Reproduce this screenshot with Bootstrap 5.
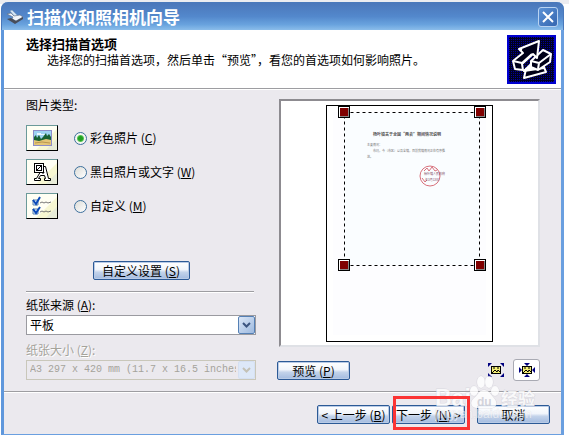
<!DOCTYPE html>
<html lang="zh-CN">
<head>
<meta charset="utf-8">
<meta name="viewport" content="width=device-width, initial-scale=1">
<title>扫描仪和照相机向导</title>
<link rel="stylesheet" href="https://cdn.jsdelivr.net/npm/bootstrap@5.3.0/dist/css/bootstrap.min.css">
<style>
  body { font: 12px/16px "Noto Sans CJK SC", sans-serif; color: #000; padding: 2px 5px 0 1px; background: linear-gradient(#ececf0 0 4px, #fff 4px); }
  .wizard { min-height: calc(100vh - 2px); background: #ebe9ee; border: 3px solid #6a9fe0; border-width: 0 3px 1px; border-radius: 7px 7px 0 0; border-left-color: #5f97dc; }
  .titlebar { height: 28px; margin: 0 -3px; padding: 0 5px 0 5px; border-radius: 7px 7px 0 0; border: 1px solid #4a79bb; border-bottom: 0; background: linear-gradient(#4b77ba, #5388cc 50%, #69a3de 80%, #8bbdea); }
  .titlebar h1 { font-size: 17px; line-height: 24px; font-weight: 700; color: #fff; }
  .close-x { width: 20px; height: 20px; border: 1px solid #b9d3f2; border-radius: 3px; background: linear-gradient(135deg, #5c92d6, #3566b0); }
  .intro { min-height: 58px; padding: 5px 5px 4px 22px; }
  .intro h2 { font-size: 13px; line-height: 18px; font-weight: 700; }
  .intro p { padding-left: 21px; line-height: 14px; }
  .etched { height: 2px; border-top: 1px solid #9d9da1; border-bottom: 1px solid #fff; }
  .main-area { padding: 0 21px 10px 22px; gap: 21px; }
  .options { flex: 0 0 230px; padding-top: 7px; }
  .kinds { gap: 8px; margin-top: 12px; }
  .kind-icon { width: 32px; height: 26px; margin-right: 16px; background: linear-gradient(135deg, #fffff4 60%, #f7f7d2 62% 78%, #e8ecd8 80%); border: 1px solid #6b9a9a; border-right: 1px solid #000; border-bottom: 1px solid #000; }
  .kind input.form-check-input { width: 13px; height: 13px; margin: 0 3px 0 0; border: 1px solid #3c6f9c; background: linear-gradient(135deg, #dcdcd7, #fff); box-shadow: none; }
  .kind input.form-check-input:checked { background: radial-gradient(circle at center, #22a022 0 2px, #55c355 3px, #f5f5f2 4px); }
  .btn-luna { height: 19px; padding: 0; font-size: 12px; line-height: 15px; color: #000; border: 1px solid #2c5a96; border-radius: 2px; background: linear-gradient(#fff, #f1f5fb 45%, #c3d3ea 60%, #a3bbdf); box-shadow: inset 0 0 0 1px #b9cbe6; width: 73px; }
  .btn-wide { width: 97px; margin-top: 42px; }
  .options .etched { margin: 11px 2px 4px 0; }
  .luna-select { height: 20px; margin-top: 2px; }
  .luna-select select { height: 20px; padding: 0 19px 0 3px; font-size: 12px; line-height: 16px; color: #000; background: #fff; border: 1px solid #9a9aa0; border-radius: 0; overflow: hidden; }
  .luna-select select:disabled { font-family: "Liberation Mono", monospace; font-size: 10px; color: #a5a39b; background: #ebe9ee; border-color: #c9c7ba; opacity: 1; }
  .drop-arrow { right: 1px; top: 1px; width: 17px; height: 18px; border: 1px solid #5580b5; border-radius: 2px; background: linear-gradient(135deg, #dbe7f7, #9db9df); pointer-events: none; color: #3c5580; }
  .drop-arrow.off { border-color: #d5e0f2; background: #dde8f8; color: #c3c1b6; }
  .size-label { margin-top: 7px; color: #a5a39b; text-shadow: 1px 1px #fff; }
  .sheet-well { margin: 9px 0 12px 2px; padding: 4px 0 3px; height: 248px; background: #fff; border: 2px solid #8d8b90; border-right-color: #dfe1e6; border-bottom-color: #dfe1e6; }
  .tool { width: 27px; height: 22px; border: 0; background: none; }
  .tool.active-tool { border: 1px solid #a9aab3; border-radius: 3px; background: #fff; }
  .footer-bar { padding: 12px 11px 10px; }
  .next-wrap { margin: 0 12px 0 2px; }
  .next-mark { inset: -9px -5px -6px 1px; border: 3px solid #fb3434; pointer-events: none; z-index: 2; }
  .watermark { right: 22px; bottom: 9px; pointer-events: none; z-index: 1; }
</style>
<script src="https://cdn.jsdelivr.net/npm/bootstrap@5.3.0/dist/js/bootstrap.bundle.min.js"></script>
</head>
<body>
<div class="wizard d-flex flex-column">
  <header class="titlebar d-flex align-items-center">
    <svg width="16" height="14" viewBox="0 0 16 14" aria-hidden="true"><path d="M3 1l2-1 6 6-3 1z" fill="#d5e6f5" stroke="#7f9bb5" stroke-width=".5"/><path d="M0 4l4-1 3 3 6-1 3 2-7 4-4-2 1-2z" fill="#f2f6fa" stroke="#5b6a80" stroke-width=".6"/><path d="M0 9l4-1 5 3 7-4v2l-8 5z" fill="#484e5a"/></svg>
    <h1 class="m-0 ms-1 flex-grow-1">扫描仪和照相机向导</h1>
    <button type="button" class="close-x d-flex align-items-center justify-content-center p-0" aria-label="关闭"><svg width="12" height="12" viewBox="0 0 12 12"><path d="M1 1l10 10M11 1L1 11" stroke="#fff" stroke-width="2"/></svg></button>
  </header>

  <section class="intro bg-white d-flex justify-content-between">
    <div>
      <h2 class="m-0">选择扫描首选项</h2>
      <p class="m-0">选择您的扫描首选项，然后单击“预览”，看您的首选项如何影响照片。</p>
    </div>
    <svg width="49" height="49" viewBox="0 0 49 49" aria-hidden="true">
      <defs><pattern id="dots" width="2" height="2" patternUnits="userSpaceOnUse"><rect width="2" height="2" fill="#000020"/><rect width="1" height="1" fill="#000098"/></pattern></defs>
      <rect width="49" height="49" fill="#0000d0"/><rect x="2" y="2" width="45" height="45" fill="url(#dots)"/>
      <g fill="#000018" stroke="#fff" stroke-width="2" stroke-linejoin="round">
        <path d="M17 43l2-9 17-4 3 7z"/><path d="M17 36l9-9 2 5 7-2 2 3z" fill="#fff"/>
        <path d="M24 26l12-11 8 4-1 8-12 8-7-3z"/><path d="M24 26l8 2 12-9M32 28l-1 6" fill="none"/>
        <path d="M6 26l10-8-4-4 20-8-2 17-4-4-11 10 1 6-8-1z"/><path d="M6 26l9 2 10-9M12 14l3 1" fill="none"/>
      </g>
    </svg>
  </section>
  <div class="etched"></div>

  <main class="main-area d-flex flex-grow-1">
    <section class="options">
      <div id="kind-title">图片类型:</div>
      <div class="kinds d-flex flex-column" role="radiogroup" aria-labelledby="kind-title">
        <div class="kind d-flex align-items-center">
          <span class="kind-icon d-flex align-items-center justify-content-center"><svg width="19" height="17" viewBox="0 0 19 17"><rect x=".5" y=".5" width="18" height="15" fill="#9ed3f3" stroke="#8d8dc8"/><path d="M4 3h4v1h4v1H4z" fill="#e9f7ff"/><path d="M1 11V7l2-2 1 3 2-3 2 4 2-2 3-4 1 3 2-2 2 3v5z" fill="#176234"/><path d="M1 10l5 1 7-2 5 1v5H1z" fill="#e4c678"/><path d="M2 13l7-1 8 1" stroke="#b99550" fill="none"/></svg></span>
          <input class="form-check-input" type="radio" name="kind" id="kc" checked><label for="kc">彩色照片 (<u>C</u>)</label>
        </div>
        <div class="kind d-flex align-items-center">
          <span class="kind-icon d-flex align-items-center justify-content-center"><svg width="18" height="20" viewBox="0 0 18 20" fill="none" stroke="#000"><path d="M10.500 4.500h2l3 12h2v2h-6v-2h1l-1-3h-4l-2 3h2v2h-6v-2h2z" fill="#fff"/><path d="M9 11h2l-1-3z" fill="#fff"/><rect x="1.500" y="1.500" width="9" height="9" fill="#fff"/><rect x="3.500" y="3.500" width="5" height="5"/><path d="M4 8l5-5"/></svg></span>
          <input class="form-check-input" type="radio" name="kind" id="kw"><label for="kw">黑白照片或文字 (<u>W</u>)</label>
        </div>
        <div class="kind d-flex align-items-center">
          <span class="kind-icon d-flex align-items-center justify-content-center"><svg width="20" height="20" viewBox="0 0 20 20" fill="none"><path d="M1 4h5v5H1zM1 13h5v5H1z" fill="#dceeff" stroke="#5d83ad"/><path d="M1 4l3 4 4-7M1 13l3 4 4-6" stroke="#0b49b8" stroke-width="2"/><path d="M8 7l2-1 2 1 2-1 2 1 3-1M8 16l2-1 2 1 2-1 2 1 3-1" stroke="#777"/></svg></span>
          <input class="form-check-input" type="radio" name="kind" id="km"><label for="km">自定义 (<u>M</u>)</label>
        </div>
      </div>
      <div class="text-center"><button type="button" class="btn btn-luna btn-wide">自定义设置 (<u>S</u>)</button></div>
      <div class="etched"></div>
      <label class="d-block" for="source">纸张来源 (<u>A</u>):</label>
      <div class="luna-select position-relative">
        <select id="source" class="form-select"><option>平板</option></select>
        <span class="drop-arrow position-absolute d-flex align-items-center justify-content-center"><svg width="9" height="6" viewBox="0 0 9 6"><path d="M1 1l3.500 3.500L8 1" fill="none" stroke="currentColor" stroke-width="2"/></svg></span>
      </div>
      <label class="d-block size-label" for="size">纸张大小 (<u>Z</u>):</label>
      <div class="luna-select position-relative">
        <select id="size" class="form-select" disabled><option>A3 297 x 420 mm (11.7 x 16.5 inches)</option></select>
        <span class="drop-arrow off position-absolute d-flex align-items-center justify-content-center"><svg width="9" height="6" viewBox="0 0 9 6"><path d="M1 1l3.500 3.500L8 1" fill="none" stroke="currentColor" stroke-width="2"/></svg></span>
      </div>
    </section>

    <section class="flex-grow-1">
      <div class="sheet-well d-flex justify-content-center">
        <svg width="167" height="237" viewBox="0 0 167 237" font-family="Noto Sans CJK SC, sans-serif">
          <rect x=".5" y=".5" width="166" height="236" fill="#fff" stroke="#000"/>
          <rect x="7" y="7" width="153" height="223" fill="#fdfdff"/>
          <rect x="18" y="8" width="136" height="152" fill="#fafdff"/>
          <text x="47" y="31" font-size="4" font-weight="700" fill="#555">杨叶镇关于全国“两会”期间情况说明</text>
          <g font-size="3" fill="#777"><text x="41" y="41">主要情况：</text><text x="47" y="47">市局，今（市区）以及全镇，目前我镇情况正在有序推</text><text x="41" y="53">进。</text></g>
          <g fill="none" stroke="#d8717c"><circle cx="104" cy="71" r="10"/><path d="M98 66l3-3 2 3 3-4 3 4 2-1M96 73l3 4 2-2"/></g>
          <g font-size="3" fill="#84506a"><text x="98" y="70">杨叶镇人民政府</text><text x="99" y="76">年3月13日</text></g>
          <rect x="18.500" y="7.500" width="135" height="153" fill="none" stroke="#000" stroke-dasharray="3 3"/>
          <g id="handles">
            <g id="grip"><rect x="12" y="1" width="12" height="12"/><rect x="13" y="2" width="10" height="10" fill="#fff"/><path d="M14 12h9V3h-1v8h-8z" fill="#888"/><rect x="14" y="3" width="8" height="8" fill="#800000"/></g>
            <use href="#grip" x="136"/><use href="#grip" y="153"/><use href="#grip" x="136" y="153"/>
          </g>
        </svg>
      </div>
      <div class="d-flex align-items-center">
        <button type="button" class="btn btn-luna me-auto">预览 (<u>P</u>)</button>
        <button type="button" class="tool p-0 d-flex align-items-center justify-content-center me-1" aria-label="缩放到整页"><svg width="16" height="14" viewBox="0 0 16 14"><rect x="3.500" y="3.500" width="9" height="7" fill="#f4ee76" stroke="#000"/><path d="M4 10l3-3 2 2 1-2 2 2M5 5h2M9 5h2" fill="none" stroke="#000"/><path d="M0 0h4L0 4zM16 0h-4l4 4zM0 14h4l-4-4zM16 14h-4l4-4z" fill="#000080"/></svg></button>
        <button type="button" class="tool active-tool p-0 d-flex align-items-center justify-content-center" aria-label="缩放到选区"><svg width="16" height="14" viewBox="0 0 16 14"><rect x="3.500" y="3.500" width="9" height="7" fill="#f4ee76" stroke="#000"/><path d="M4 10l3-3 2 2 1-2 2 2M5 5h2M9 5h2" fill="none" stroke="#000"/><path d="M5 0h6L8 3zM5 14h6l-3-3zM0 4v6l3-3zM16 4v6l-3-3z" fill="#000080"/></svg></button>
      </div>
    </section>
  </main>

  <div class="etched"></div>
  <footer class="footer-bar position-relative d-flex justify-content-end">
    <button type="button" class="btn btn-luna">&lt; 上一步 (<u>B</u>)</button>
    <div class="next-wrap position-relative d-flex"><button type="button" class="btn btn-luna">下一步 (<u>N</u>) &gt;</button><span class="next-mark position-absolute"></span></div>
    <button type="button" class="btn btn-luna">取消</button>
    <svg class="watermark position-absolute" width="104" height="52" viewBox="0 0 104 52" fill="#fff" fill-opacity=".8" stroke="#b4b4c0" stroke-opacity=".35" stroke-width="1" paint-order="stroke" font-family="Liberation Sans, Noto Sans CJK SC, sans-serif">
      <text x="0" y="33" font-size="23" font-weight="700">Bai</text>
      <ellipse cx="39" cy="18" rx="4" ry="5"/><ellipse cx="46" cy="9" rx="4" ry="6"/><ellipse cx="54" cy="9" rx="4" ry="6"/><ellipse cx="60" cy="18" rx="4" ry="5"/>
      <path d="M49 17c5 0 7 5 10 8s4 9-2 10c-4 0-12 0-16 0-6-1-6-7-2-10s5-8 10-8z"/>
      <text x="42" y="33" font-size="12" font-weight="700" fill="#c9c9d2" stroke="none">du</text>
      <text x="66" y="32" font-size="17" font-weight="700">经验</text>
      <text x="0" y="45" font-size="12" fill-opacity=".6" stroke-opacity=".2">jingyan.baidu.com</text>
    </svg>
  </footer>
</div>
</body>
</html>
